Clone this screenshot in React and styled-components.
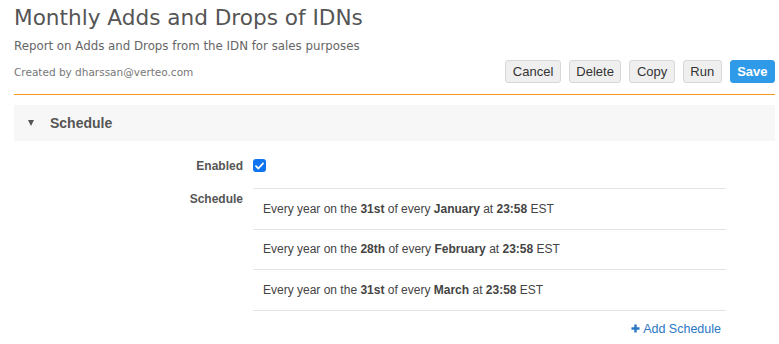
import React from "react";
import styled, { createGlobalStyle } from "styled-components";

const Global = createGlobalStyle`
  html, body { margin: 0; padding: 0; background: #fff; }
  body { font-family: "Liberation Sans", Arial, sans-serif; }
`;

const Page = styled.div`
  padding: 0 4px 0 14px;
  width: 761px;
`;

const Title = styled.h1`
  margin: 0;
  padding-top: 4px;
  font-family: "DejaVu Sans", sans-serif;
  font-weight: normal;
  font-size: 21.6px;
  line-height: 28px;
  color: #555;
`;

const Subtitle = styled.div`
  margin-top: 6px;
  font-family: "DejaVu Sans", sans-serif;
  font-size: 11.8px;
  line-height: 16px;
  color: #666;
`;

const MetaRow = styled.div`
  display: flex;
  align-items: center;
  justify-content: space-between;
  margin-top: 6px;
  padding-bottom: 11px;
  border-bottom: 1px solid #f39a1e;
`;

const Creator = styled.div`
  font-family: "DejaVu Sans", sans-serif;
  font-size: 10.5px;
  color: #777;
`;

const Actions = styled.div`
  display: flex;
  gap: 8px;
`;

const Button = styled.button`
  height: 23px;
  padding: 0 6.5px;
  border-radius: 3px;
  font-family: "Liberation Sans", Arial, sans-serif;
  font-size: 13px;
  cursor: pointer;
  border: 1px solid ${(p) => (p.$primary ? "#2f9be8" : "#d8d8d8")};
  background: ${(p) => (p.$primary ? "#2f9be8" : "#efefef")};
  color: ${(p) => (p.$primary ? "#fff" : "#333")};
  font-weight: ${(p) => (p.$primary ? "bold" : "normal")};
`;

const SectionHeader = styled.div`
  margin-top: 10px;
  height: 36px;
  background: #f7f7f7;
  display: flex;
  align-items: center;
  padding-left: 14px;
  gap: 16px;
`;

const Caret = styled.span`
  width: 0;
  height: 0;
  border-left: 3.5px solid transparent;
  border-right: 3.5px solid transparent;
  border-top: 6px solid #555;
`;

const SectionTitle = styled.span`
  font-size: 14px;
  font-weight: bold;
  color: #555;
`;

const Form = styled.div`
  display: grid;
  grid-template-columns: 229px 473px;
  column-gap: 10px;
  padding-top: 17px;
`;

const Label = styled.div`
  text-align: right;
  font-size: 12px;
  font-weight: bold;
  color: #555;
  padding-top: ${(p) => p.$top || 0}px;
`;

const CheckCell = styled.div`
  height: 29px;
  display: flex;
  align-items: flex-start;
  padding-top: 1px;
`;

const Check = styled.span`
  width: 13px;
  height: 13px;
  border-radius: 3px;
  background: #0f74f0;
  display: inline-flex;
  align-items: center;
  justify-content: center;
`;

const List = styled.div`
  border-top: 1px solid #e4e4e4;
`;

const Item = styled.div`
  box-sizing: border-box;
  height: 40.5px;
  border-bottom: 1px solid #e4e4e4;
  display: flex;
  align-items: center;
  padding-left: 10px;
  font-size: 12px;
  color: #444;
`;

const AddRow = styled.div`
  display: flex;
  justify-content: flex-end;
  padding-top: 11px;
  padding-right: 5px;
`;

const AddLink = styled.a`
  display: inline-flex;
  align-items: center;
  gap: 3px;
  font-size: 12.5px;
  color: #2b77c4;
  text-decoration: none;
  cursor: pointer;
`;

const schedules = [
  { day: "31st", month: "January" },
  { day: "28th", month: "February" },
  { day: "31st", month: "March" },
];

export default function App() {
  return (
    <>
      <Global />
      <Page>
        <Title>Monthly Adds and Drops of IDNs</Title>
        <Subtitle>Report on Adds and Drops from the IDN for sales purposes</Subtitle>
        <MetaRow>
          <Creator>Created by dharssan@verteo.com</Creator>
          <Actions>
            <Button>Cancel</Button>
            <Button>Delete</Button>
            <Button>Copy</Button>
            <Button>Run</Button>
            <Button $primary>Save</Button>
          </Actions>
        </MetaRow>
        <SectionHeader>
          <Caret />
          <SectionTitle>Schedule</SectionTitle>
        </SectionHeader>
        <Form>
          <Label $top={1}>Enabled</Label>
          <CheckCell>
            <Check>
              <svg width="9" height="8" viewBox="0 0 9 8">
                <path d="M1 4.2 L3.4 6.5 L8 1.3" stroke="#fff" strokeWidth="1.8" fill="none" strokeLinecap="round" strokeLinejoin="round" />
              </svg>
            </Check>
          </CheckCell>
          <Label $top={4}>Schedule</Label>
          <div>
            <List>
              {schedules.map((s, i) => (
                <Item key={i}>
                  <span>
                    Every year on the <b>{s.day}</b> of every <b>{s.month}</b> at <b>23:58</b> EST
                  </span>
                </Item>
              ))}
            </List>
            <AddRow>
              <AddLink>
                <svg width="9" height="9" viewBox="0 0 9 9">
                  <path d="M4.5 0.5 V8.5 M0.5 4.5 H8.5" stroke="#2b77c4" strokeWidth="2.4" />
                </svg>
                Add Schedule
              </AddLink>
            </AddRow>
          </div>
        </Form>
      </Page>
    </>
  );
}
